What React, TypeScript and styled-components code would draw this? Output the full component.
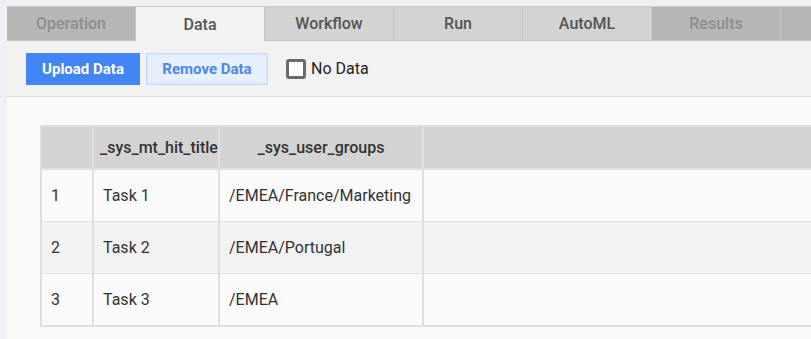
import React from "react";
import styled, {createGlobalStyle} from "styled-components";

const GlobalStyle = createGlobalStyle`
  html, body {
    margin: 0;
    padding: 0;
    background: #eef0f4;
    overflow: hidden;
    font-family: Roboto, "Liberation Sans", sans-serif;
  }
`

const tabs = [
  {label: 'Operation', state: 'disabled'},
  {label: 'Data', state: 'active'},
  {label: 'Workflow', state: 'normal'},
  {label: 'Run', state: 'normal'},
  {label: 'AutoML', state: 'normal'},
  {label: 'Results', state: 'disabled'},
  {label: '', state: 'disabled'},
] as const

type TabState = typeof tabs[number]['state']

const rows = [
  ['1', 'Task 1', '/EMEA/France/Marketing'],
  ['2', 'Task 2', '/EMEA/Portugal'],
  ['3', 'Task 3', '/EMEA'],
]

const App = () => {
  return (
    <>
      <GlobalStyle/>
      <Page>
        <TabBar>
          {tabs.map((t, i) => (
            <Tab key={i} $state={t.state}>{t.label}</Tab>
          ))}
        </TabBar>
        <Toolbar>
          <PrimaryButton>Upload Data</PrimaryButton>
          <SecondaryButton>Remove Data</SecondaryButton>
          <CheckLabel>
            <CheckBox/>
            No Data
          </CheckLabel>
        </Toolbar>
        <Content>
          <DataTable>
            <colgroup>
              <col style={{width: 52}}/>
              <col style={{width: 126}}/>
              <col style={{width: 204}}/>
              <col/>
            </colgroup>
            <thead>
            <tr>
              <HeadCell/>
              <HeadCell>_sys_mt_hit_title</HeadCell>
              <HeadCell>_sys_user_groups</HeadCell>
              <HeadCell/>
            </tr>
            </thead>
            <tbody>
            {rows.map((r, i) => (
              <Row key={i} $odd={i % 2 === 1}>
                {r.map((c, j) => <Cell key={j}>{c}</Cell>)}
                <Cell/>
              </Row>
            ))}
            </tbody>
          </DataTable>
        </Content>
      </Page>
    </>
  )
}

const Page = styled.div`
  margin: 6px 0 0 7px;
  height: 333px;
  background: #fafafa;
  display: flex;
  flex-direction: column;
`
const TabBar = styled.div`
  display: flex;
  height: 35px;
  border-top: 1px solid #c9c9c9;
  box-sizing: border-box;
  background: #f2f2f2;
`
const Tab = styled.div<{ $state: TabState }>`
  flex: 0 0 129px;
  box-sizing: border-box;
  display: flex;
  align-items: center;
  justify-content: center;
  font-size: 16px;
  font-weight: 500;
  border-right: 1px solid #c6c6c6;
  border-bottom: ${({$state}) => $state === 'active' ? 'none' : '1px solid #c6c6c6'};
  background: ${({$state}) => $state === 'active' ? '#f2f2f2' : $state === 'disabled' ? '#b6b6b6' : '#d3d3d3'};
  color: ${({$state}) => $state === 'disabled' ? '#8e8e8e' : '#555'};

  &:last-child {
    flex: 1;
    border-right: none;
  }
`
const Toolbar = styled.div`
  display: flex;
  align-items: center;
  gap: 6px;
  height: 56px;
  padding: 0 0 0 19px;
  background: #f2f2f2;
  border-bottom: 1px solid #dcdcdc;
  box-sizing: border-box;
`
const PrimaryButton = styled.button`
  width: 114px;
  height: 32px;
  border: none;
  background: #4285f4;
  color: #fff;
  font-family: inherit;
  font-size: 15px;
  font-weight: 700;
  padding: 0;
`
const SecondaryButton = styled.button`
  width: 122px;
  height: 32px;
  border: 1px solid #c4d8fb;
  box-shadow: inset 0 0 3px #c4d8fb;
  background: #e8f0fe;
  color: #4a86f0;
  font-family: inherit;
  font-size: 15px;
  font-weight: 700;
  padding: 0;
`
const CheckLabel = styled.label`
  display: flex;
  align-items: center;
  gap: 5px;
  margin-left: 12px;
  font-size: 16px;
  color: #222;
`
const CheckBox = styled.span`
  width: 20px;
  height: 20px;
  box-sizing: border-box;
  border: 3px solid #6b6b6b;
  border-radius: 3px;
  background: #fff;
`
const Content = styled.div`
  flex: 1;
  padding: 28px 0 0 33px;
  background: #fafafa;
`
const DataTable = styled.table`
  width: 100%;
  border-collapse: collapse;
  table-layout: fixed;
  border: 2px solid #dedede;
  border-right: none;
  color: #333;
`
const HeadCell = styled.th`
  height: 41px;
  padding: 0 6px;
  background: #d3d3d3;
  font-size: 16px;
  font-weight: 500;
  text-align: center;
  white-space: nowrap;
  overflow: hidden;
  border-left: 2px solid #e0e0e0;
  border-bottom: 2px solid #e0e0e0;
  color: #333;

  &:first-child {
    border-left: none;
  }
`
const Row = styled.tr<{ $odd: boolean }>`
  background: ${({$odd}) => $odd ? '#f2f2f2' : '#fafafa'};
  border-bottom: 1px solid #e0e0e0;
`
const Cell = styled.td`
  height: 51px;
  padding: 0 9px;
  font-size: 16px;
  border-left: 2px solid #e0e0e0;

  &:first-child {
    border-left: none;
  }
`

export default App;
